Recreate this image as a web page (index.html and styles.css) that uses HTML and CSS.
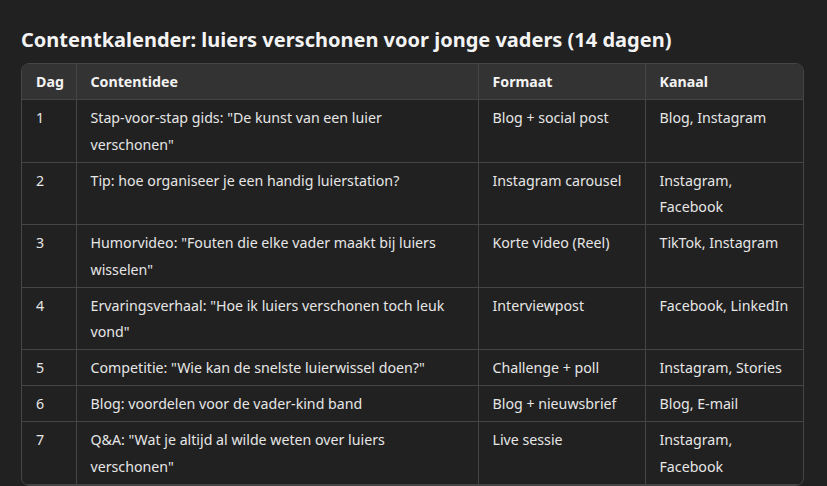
FILE: index.html
```html
<!DOCTYPE html>
<html lang="nl">
<head>
<meta charset="utf-8">
<link rel="stylesheet" href="styles.css">
</head>
<body>
<main class="page">
  <h3 class="title">Contentkalender: luiers verschonen voor jonge vaders (14 dagen)</h3>
  <div class="table-wrap">
    <table class="cal">
      <colgroup>
        <col class="c-dag"><col class="c-idee"><col class="c-format"><col class="c-kanaal">
      </colgroup>
      <thead>
        <tr><th>Dag</th><th>Contentidee</th><th>Formaat</th><th>Kanaal</th></tr>
      </thead>
      <tbody>
        <tr><td>1</td><td>Stap-voor-stap gids: "De kunst van een luier verschonen"</td><td>Blog + social post</td><td>Blog, Instagram</td></tr>
        <tr><td>2</td><td>Tip: hoe organiseer je een handig luierstation?</td><td>Instagram carousel</td><td>Instagram, Facebook</td></tr>
        <tr><td>3</td><td>Humorvideo: "Fouten die elke vader maakt bij luiers wisselen"</td><td>Korte video (Reel)</td><td>TikTok, Instagram</td></tr>
        <tr><td>4</td><td>Ervaringsverhaal: "Hoe ik luiers verschonen toch leuk vond"</td><td>Interviewpost</td><td>Facebook, LinkedIn</td></tr>
        <tr><td>5</td><td>Competitie: "Wie kan de snelste luierwissel doen?"</td><td>Challenge + poll</td><td>Instagram, Stories</td></tr>
        <tr><td>6</td><td>Blog: voordelen voor de vader-kind band</td><td>Blog + nieuwsbrief</td><td>Blog, E-mail</td></tr>
        <tr><td>7</td><td>Q&amp;A: "Wat je altijd al wilde weten over luiers verschonen"</td><td>Live sessie</td><td>Instagram, Facebook</td></tr>
      </tbody>
    </table>
  </div>
</main>
</body>
</html>
```

FILE: styles.css
```css
html, body {
  margin: 0;
  padding: 0;
  background: #212121;
  color: #ececec;
  font-family: "Noto Sans", "Open Sans", sans-serif;
}

.page {
  padding: 26px 24px 0 21px;
}

.title {
  margin: 0 0 9px 0;
  font-size: 20px;
  line-height: 28px;
  font-weight: 700;
  color: #f3f3f3;
}

.table-wrap {
  width: 781px;
  border: 1px solid #454545;
  border-radius: 8px;
  overflow: hidden;
}

.cal {
  width: 100%;
  border-collapse: collapse;
  table-layout: fixed;
  font-size: 14.2px;
  line-height: 26.5px;
}

.c-dag { width: 54px; }
.c-idee { width: 402px; }
.c-format { width: 167px; }
.c-kanaal { width: auto; }

.cal th,
.cal td {
  padding: 5px 14px 3.5px 14px;
  text-align: left;
  vertical-align: top;
  border-right: 1px solid #454545;
  border-bottom: 1px solid #454545;
}

.cal th:last-child,
.cal td:last-child {
  border-right: none;
}

.cal th {
  background: #333333;
  font-weight: 700;
  color: #f3f3f3;
}

.cal td {
  color: #e6e6e6;
}
```
